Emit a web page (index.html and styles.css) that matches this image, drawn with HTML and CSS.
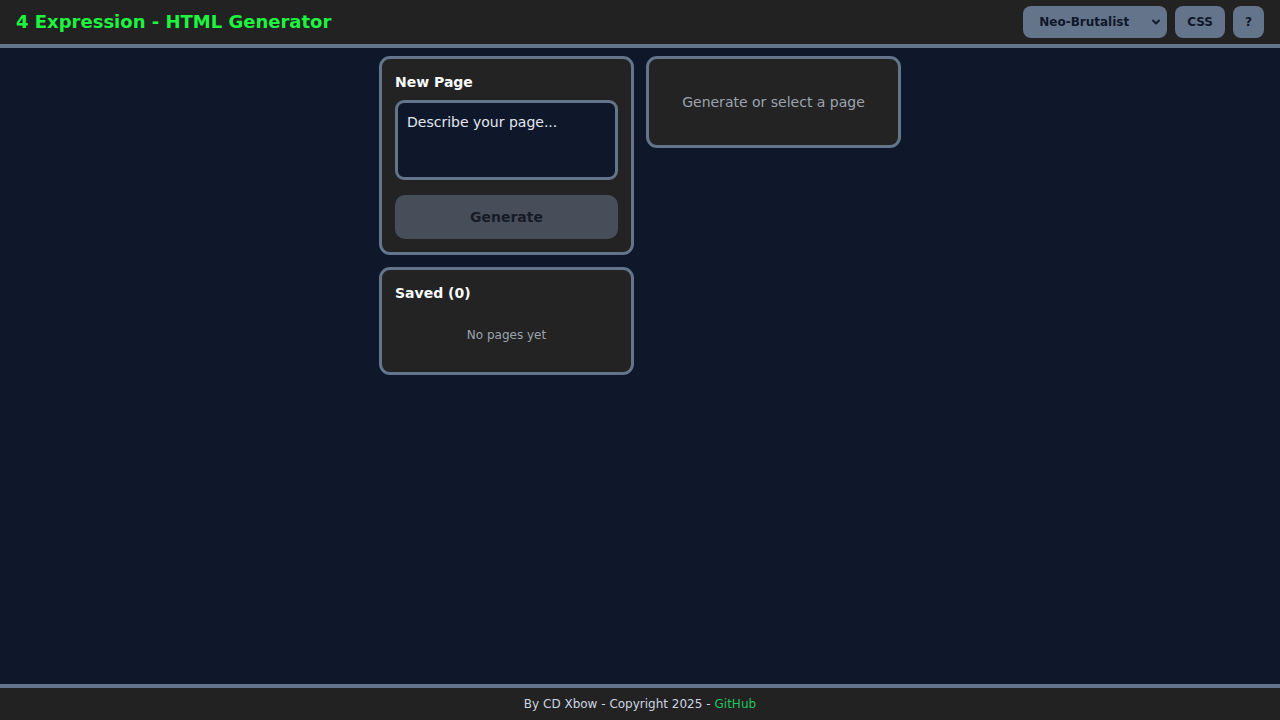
FILE: index.html
```html
<!DOCTYPE html>
<html lang="en">
<head>
<meta charset="utf-8">
<title>4 Expression - HTML Generator</title>
<link rel="stylesheet" href="styles.css">
</head>
<body>
<div class="app">
  <header class="topbar">
    <h1 class="brand">4 Expression - HTML Generator</h1>
    <div class="tools">
      <div class="select-wrap">
        <select class="theme-select">
          <option>Neo-Brutalist</option>
        </select>
        <svg class="chev" width="10" height="10" viewBox="0 0 10 10"><path d="M2 3.5 L5 6.5 L8 3.5" fill="none" stroke="#0f172a" stroke-width="1.8" stroke-linecap="round" stroke-linejoin="round"/></svg>
      </div>
      <button class="tool-btn">CSS</button>
      <button class="tool-btn help">?</button>
    </div>
  </header>

  <main class="workspace">
    <div class="side">
      <section class="card">
        <h2 class="card-title">New Page</h2>
        <textarea class="prompt" placeholder="Describe your page..."></textarea>
        <button class="generate">Generate</button>
      </section>
      <section class="card">
        <h2 class="card-title">Saved (0)</h2>
        <p class="empty">No pages yet</p>
      </section>
    </div>
    <section class="card preview">
      <p class="preview-msg">Generate or select a page</p>
    </section>
  </main>

  <footer class="footer">
    By CD Xbow - Copyright 2025 - <a href="#" class="gh">GitHub</a>
  </footer>
</div>
</body>
</html>
```
FILE: styles.css
```css
* { box-sizing: border-box; }

html, body {
  margin: 0;
  height: 100%;
}

body {
  background: #0f172a;
  font-family: "DejaVu Sans", "Liberation Sans", sans-serif;
  color: #f1f5f9;
}

.app {
  display: flex;
  flex-direction: column;
  height: 100vh;
}

.topbar {
  height: 48px;
  flex: none;
  background: #222222;
  border-bottom: 4px solid #64748b;
  display: flex;
  align-items: center;
  justify-content: space-between;
  padding: 0 16px;
}

.brand {
  margin: 0;
  font-size: 18px;
  font-weight: bold;
  color: #1cf43f;
  line-height: 24px;
}

.tools {
  display: flex;
  align-items: center;
  gap: 8px;
}

.select-wrap {
  position: relative;
  width: 144px;
  height: 32px;
}

.theme-select {
  appearance: none;
  -webkit-appearance: none;
  width: 100%;
  height: 100%;
  border: none;
  border-radius: 8px;
  background: #64748b;
  color: #0f172a;
  font-family: inherit;
  font-size: 12px;
  font-weight: bold;
  padding: 0 16px;
  outline: none;
}

.chev {
  position: absolute;
  right: 6px;
  top: 11px;
  pointer-events: none;
}

.tool-btn {
  height: 32px;
  border: none;
  border-radius: 8px;
  background: #64748b;
  color: #0f172a;
  font-family: inherit;
  font-size: 12px;
  font-weight: bold;
  padding: 0 12px;
}

.tool-btn.help {
  width: 31px;
  padding: 0;
}

.workspace {
  flex: 1;
  display: flex;
  justify-content: center;
  align-items: flex-start;
  gap: 12px;
  padding-top: 8px;
}

.side {
  width: 255px;
  display: flex;
  flex-direction: column;
  gap: 12px;
}

.card {
  background: #232323;
  border: 3px solid #64748b;
  border-radius: 11px;
  padding: 13px;
}

.card-title {
  margin: 0 0 8px;
  font-size: 14px;
  font-weight: bold;
  line-height: 20px;
  color: #f8fafc;
}

.prompt {
  display: block;
  width: 100%;
  height: 80px;
  resize: none;
  background: #0f172a;
  border: 3px solid #64748b;
  border-radius: 9px;
  padding: 10px 9px 8px;
  font-family: inherit;
  font-size: 14px;
  line-height: 18px;
  color: #f1f5f9;
  outline: none;
}

.prompt::placeholder {
  color: #e2e8f0;
  opacity: 1;
}

.generate {
  display: block;
  width: 100%;
  height: 44px;
  margin-top: 15px;
  border: none;
  border-radius: 10px;
  background: #474e5a;
  color: #161b26;
  font-family: inherit;
  font-size: 14px;
  font-weight: bold;
}

.empty {
  margin: 0;
  padding: 16px 0;
  text-align: center;
  font-size: 12px;
  line-height: 16px;
  color: #9ca3af;
}

.preview {
  width: 255px;
  padding: 33px 13px;
}

.preview-msg {
  margin: 0;
  text-align: center;
  font-size: 14px;
  line-height: 20px;
  color: #9ca3af;
}

.footer {
  flex: none;
  height: 36px;
  background: #222222;
  border-top: 4px solid #64748b;
  display: flex;
  align-items: center;
  justify-content: center;
  font-size: 12px;
  color: #cbd5e1;
}

.gh {
  color: #22c55e;
  text-decoration: none;
  margin-left: 4px;
}
```
